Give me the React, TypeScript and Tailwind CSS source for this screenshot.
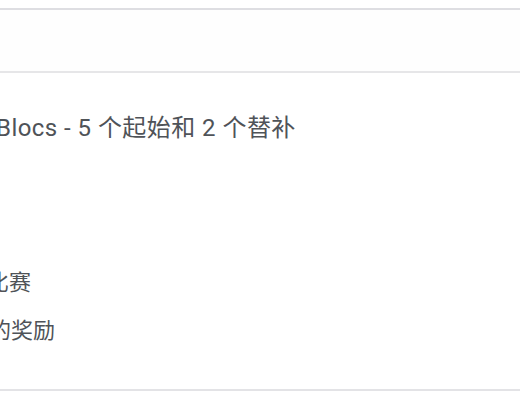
export default function App() {
  const font = { fontFamily: 'Roboto, "Noto Sans CJK SC", sans-serif' };
  return (
    <div className="w-[520px] h-[400px] overflow-hidden bg-white" style={font}>
      <div className="h-[8px]" />
      <div className="h-[65px] border-t-[2px] border-b-[2px] border-t-[#dedee2] border-b-[#e6e6e8] bg-[#fefefe]" />
      <div className="h-[316px] flex flex-col pt-[40px] text-[#4f5358]">
        <div className="ml-[-4px] whitespace-nowrap text-[24px] leading-[30px] tracking-[0.45px]">Blocs - 5 个起始和 2 个替补</div>
        <div className="ml-[-13px] mt-[125px] whitespace-nowrap text-[22px] leading-[30px]">比赛</div>
        <div className="ml-[-11px] mt-[18px] whitespace-nowrap text-[22px] leading-[30px]">的奖励</div>
      </div>
      <div className="border-t-[2px] border-[#e3e3e6]" />
    </div>
  );
}
